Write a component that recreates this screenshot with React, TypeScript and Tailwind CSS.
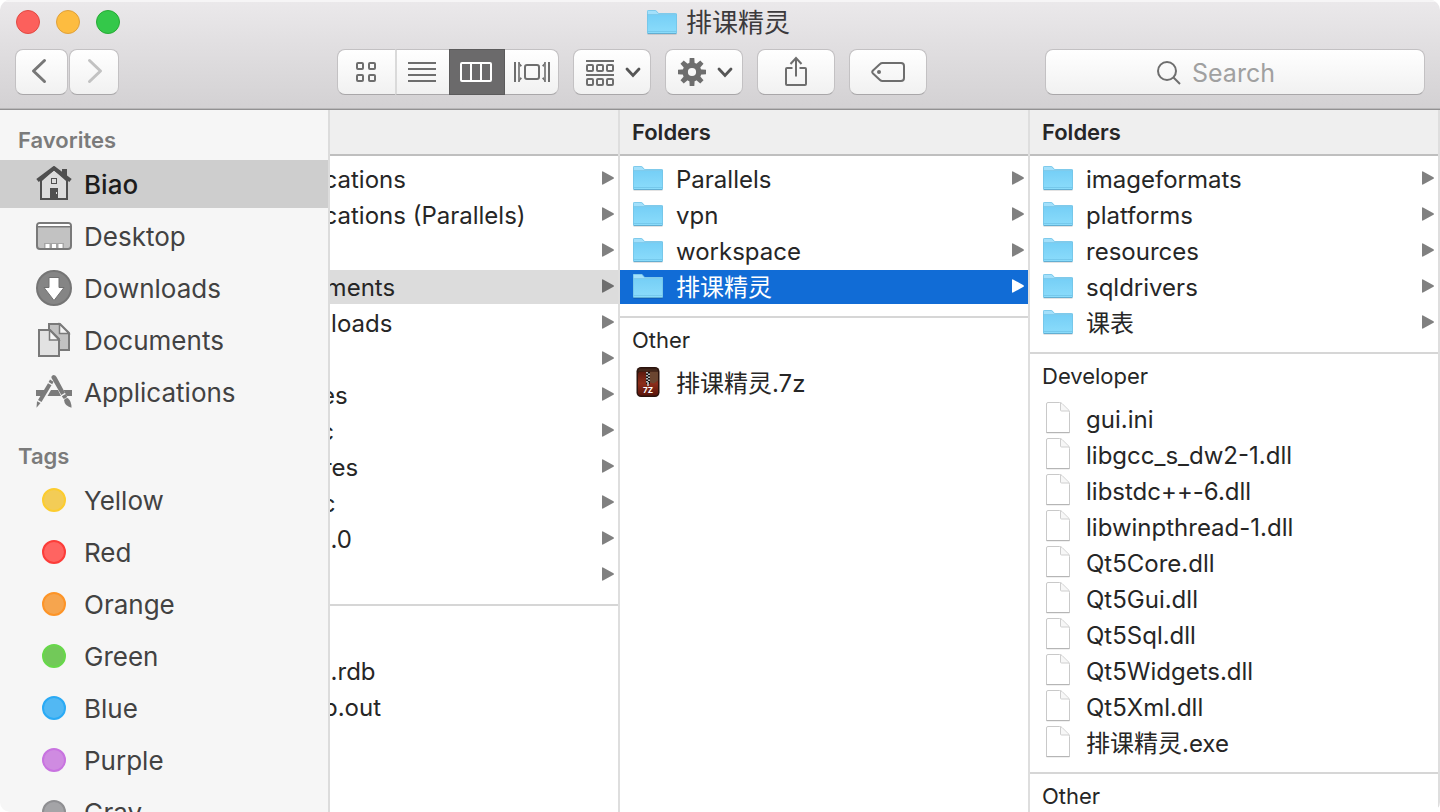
import React from "react";

type Kind = "folder" | "file" | "archive";
type Entry = { name: string; kind: Kind; selected?: "active" | "inactive" };
type Section = { title: string; entries: Entry[] };

const folder = (name: string, selected?: Entry["selected"]): Entry => ({ name, kind: "folder", selected });
const file = (name: string): Entry => ({ name, kind: "file" });

const columns: Section[][] = [
  [
    {
      title: "",
      entries: [
        folder("Applications"),
        folder("Applications (Parallels)"),
        folder(""),
        folder("Documents", "inactive"),
        folder("Downloads"),
        folder(""),
        folder("Movies"),
        folder("Music"),
        folder("Pictures"),
        folder("Public"),
        folder("Qt5.11.0"),
        folder(""),
      ],
    },
    { title: "", entries: [file("dump.rdb"), file("nohup.out")] },
  ],
  [
    {
      title: "Folders",
      entries: [folder("Parallels"), folder("vpn"), folder("workspace"), folder("排课精灵", "active")],
    },
    { title: "Other", entries: [{ name: "排课精灵.7z", kind: "archive" }] },
  ],
  [
    {
      title: "Folders",
      entries: [
        folder("imageformats"),
        folder("platforms"),
        folder("resources"),
        folder("sqldrivers"),
        folder("课表"),
      ],
    },
    {
      title: "Developer",
      entries: [
        file("gui.ini"),
        file("libgcc_s_dw2-1.dll"),
        file("libstdc++-6.dll"),
        file("libwinpthread-1.dll"),
        file("Qt5Core.dll"),
        file("Qt5Gui.dll"),
        file("Qt5Sql.dll"),
        file("Qt5Widgets.dll"),
        file("Qt5Xml.dll"),
        file("排课精灵.exe"),
      ],
    },
    { title: "Other", entries: [] },
  ],
];

const tags = [
  { name: "Yellow", dot: "border-[#fccc2f] bg-[#f3cc56]" },
  { name: "Red", dot: "border-[#fc3d39] bg-[#ff6461]" },
  { name: "Orange", dot: "border-[#fd9427] bg-[#f6a54e]" },
  { name: "Green", dot: "border-[#67d84a] bg-[#72c959]" },
  { name: "Blue", dot: "border-[#2aaaf5] bg-[#52b8f3]" },
  { name: "Purple", dot: "border-[#c873e0] bg-[#cf8be1]" },
  { name: "Gray", dot: "border-[#8f8f92] bg-[#a4a4a7]" },
];

function FolderIcon() {
  return (
    <svg width="32" height="26" viewBox="0 0 32 26" aria-hidden="true">
      <defs>
        <linearGradient id="folderFront" x1="0" y1="0" x2="0" y2="1">
          <stop offset="0" stopColor="#76cff6" />
          <stop offset="1" stopColor="#8bdcfb" />
        </linearGradient>
      </defs>
      <path d="M1.5 25.3h29" stroke="#000" strokeOpacity=".14" />
      <path d="M1 2.2Q1 1 2.2 1H9q1 0 1.7.8L12 3.4q.6.6 1.5.6h16.3q1.2 0 1.2 1.2V24H1z" fill="#a3e0fb" />
      <path d="M1 6h30v17.5q0 1-1 1H2q-1 0-1-1z" fill="url(#folderFront)" />
      <path d="M1 5.5h30M1.5 22.5h29" stroke="#67bce2" strokeOpacity=".6" fill="none" />
      <path d="M1.5 24.5h29" stroke="#62aed2" />
      <path d="M1.5 24V2.5q0-1 1-1H9q.8 0 1.4.7l1.3 1.6q.5.7 1.5.7h16.3q1 0 1 1V24" fill="none" stroke="#73c3e6" strokeOpacity=".75" />
    </svg>
  );
}

function FileIcon() {
  return (
    <svg width="32" height="34" viewBox="0 0 32 34" aria-hidden="true">
      <path d="M4.5 31.5V3q0-1.5 1.5-1.5h11.5q1.5 0 2.5 1l6.500 6.500q1 1 1 2.500v20z" fill="#fff" stroke="#c9c9c9" />
      <path d="M18.5 2v7q0 1 1 1h7.5" fill="#f7f7f7" stroke="#cfcfcf" />
      <path d="M4.5 31.7h23" stroke="#b0b0b0" />
    </svg>
  );
}

function ArchiveIcon() {
  return (
    <svg width="32" height="34" viewBox="0 0 32 34" aria-hidden="true">
      <defs>
        <linearGradient id="leather" x1="0" y1="0" x2="0" y2="1">
          <stop offset="0" stopColor="#5c1a0e" />
          <stop offset=".5" stopColor="#8c2d1a" />
          <stop offset="1" stopColor="#5a150b" />
        </linearGradient>
      </defs>
      <rect x="4.5" y="2" width="23" height="30" rx="4.5" fill="#2b130d" />
      <rect x="6" y="6.5" width="20" height="24" rx="3" fill="url(#leather)" />
      <path d="M18 6.5h8v9l-4 3-4-1z" fill="#6b4530" />
      <path d="M7 3.5h18l1 3H6z" fill="#43271b" />
      <path d="M16 7v12" stroke="#111" strokeWidth="4" />
      <path d="M15 7v12" stroke="#eee" strokeWidth="1.5" strokeDasharray="1.5 1.5" />
      <path d="M17 8.5v9" stroke="#eee" strokeWidth="1.5" strokeDasharray="1.5 1.5" />
      <path d="M16 17v4" stroke="#aaa" strokeWidth="2" />
      <text x="16" y="28" textAnchor="middle" fontSize="8" fontWeight="700" fill="#fff" fontFamily="Inter, sans-serif">
        7Z
      </text>
    </svg>
  );
}

const kindIcon: Record<Kind, React.ReactNode> = {
  folder: <FolderIcon />,
  file: <FileIcon />,
  archive: <ArchiveIcon />,
};

function HomeIcon() {
  return (
    <svg width="36" height="36" viewBox="0 1 36 36" aria-hidden="true" fill="none">
      <path d="M5 15.5V34h26V15.5L18 4z" fill="#dcdcdc" stroke="#4f4f4f" strokeWidth="2" />
      <path d="M26 4h5v9.500l-5-4z" fill="#4f4f4f" />
      <path d="M1.5 15.500L18 3.200l16.500 12.300" stroke="#4f4f4f" strokeWidth="4" />
      <rect x="15.500" y="13.500" width="5" height="5" fill="#dcdcdc" stroke="#4f4f4f" />
      <path d="M14 34V23h8v11z" fill="#4f4f4f" />
      <path d="M20.500 27v2" stroke="#ddd" />
    </svg>
  );
}

function DesktopIcon() {
  return (
    <svg width="36" height="36" viewBox="0 0 36 36" aria-hidden="true">
      <rect x="1" y="5" width="34" height="26" rx="3" fill="#c2c2c2" stroke="#797979" strokeWidth="2" />
      <path d="M2 8V7.500Q2 6 3.500 6h29Q34 6 34 7.500V8z" fill="#fff" />
      <path d="M2 8.800h32" stroke="#797979" strokeWidth="1.500" />
      <path d="M8 25h20v5H8z" fill="#a5a5a5" />
      <path d="M9.500 26h4v4h-4zM16 26h4v4h-4zM22.500 26h4v4h-4z" fill="#fff" />
    </svg>
  );
}

function DownloadsIcon() {
  return (
    <svg width="36" height="36" viewBox="0 0 36 36" aria-hidden="true">
      <circle cx="18" cy="18" r="17" fill="#858585" stroke="#757575" strokeWidth="2" />
      <path d="M13 7.500h10v10h5L18 30.500 8 17.500h5z" fill="#fff" stroke="#717171" />
    </svg>
  );
}

function DocumentsIcon() {
  return (
    <svg width="36" height="36" viewBox="0 0 36 36" aria-hidden="true" stroke="#797979" strokeWidth="2">
      <path d="M13 2h11l9 9v17H13z" fill="#c2c2c2" />
      <path d="M23.500 2v9.500H33z" fill="#f4f4f4" strokeWidth="1.500" />
      <path d="M3 8h11l9 9v17H3z" fill="#e2e2e2" />
      <path d="M13.500 8v10H23z" fill="#f6f6f6" strokeWidth="1.500" />
    </svg>
  );
}

function ApplicationsIcon() {
  return (
    <svg width="36" height="36" viewBox="0 0 36 36" aria-hidden="true" fill="#7b7b7b">
      <path d="M0 16h9.500L6 22H0zM15 16h7l3 6H11.500zM27.500 16H36v6h-5.300z" />
      <path d="M17.500 1q2 0 3 2L29 18.800l-3.700 2.300L15.500 4q-.6-2.200 2-3z" />
      <path d="M25.800 22.200l3.800-2.300 1.700 3-3.500 2.200z" />
      <path d="M28 26q2-2.500 4-1.800 3.500 3 3.500 9.500Q28.500 32 28 26z" />
      <path d="M14 5.500l3.500 2.200-1.300 2.500-3.600-2.200z" />
      <path d="M12 9.200l3.500 2.100L5.500 28 2 26z" />
      <path d="M1 27.300l3.500 1.800-4 4.700z" />
    </svg>
  );
}

const favorites = [
  { name: "Biao", icon: <HomeIcon />, current: true },
  { name: "Desktop", icon: <DesktopIcon /> },
  { name: "Downloads", icon: <DownloadsIcon /> },
  { name: "Documents", icon: <DocumentsIcon /> },
  { name: "Applications", icon: <ApplicationsIcon /> },
];

const gearTeeth = [0, 45, 90, 135, 180, 225, 270, 315];

function GearIcon() {
  return (
    <svg width="28" height="28" viewBox="0 0 28 28" aria-hidden="true">
      {gearTeeth.map((angle) => (
        <path key={angle} d="M11.200 7l.5-7h4.600l.5 7z" fill="#6e6e6e" transform={`rotate(${angle} 14 14)`} />
      ))}
      <circle cx="14" cy="14" r="6.800" fill="none" stroke="#6e6e6e" strokeWidth="5.400" />
    </svg>
  );
}

function ChevronDown() {
  return (
    <svg width="16" height="12" viewBox="0 0 16 12" aria-hidden="true" fill="none">
      <path d="M2 3l6 6.500L14 3" stroke="#555" strokeWidth="2.800" strokeLinecap="round" />
    </svg>
  );
}

function SmallBoxes({ y }: { y: number }) {
  return (
    <>
      {[1, 11, 21].map((x) => (
        <rect key={x} x={x} y={y} width="6" height="6" rx="1" />
      ))}
    </>
  );
}

const raised =
  "flex items-center justify-center border border-[#c3c1c3] border-b-[#a9a7a9] bg-gradient-to-b from-white to-[#f1f1f1]";

function Toolbar() {
  return (
    <header className="h-[110px] shrink-0 border-b border-[#929192] bg-gradient-to-b from-[#ebe9eb] to-[#d3d1d3] px-[15px] shadow-[inset_0_2px_0_#f6f5f6,inset_0_-1px_0_#b9b8b9]">
      <div className="grid h-11 grid-cols-[1fr_auto_1fr] items-center">
        <div className="flex gap-4 pl-px">
          <button aria-label="Close" className="size-6 rounded-full border border-[#e14942] bg-[#fc605c]" />
          <button aria-label="Minimize" className="size-6 rounded-full border border-[#dfa03a] bg-[#fdbc40]" />
          <button aria-label="Zoom" className="size-6 rounded-full border border-[#27aa35] bg-[#34c84a]" />
        </div>
        <h1 className="flex items-center gap-2 pr-1 text-[26px] leading-8 text-[#3c3a3c]">
          <FolderIcon />
          <span className="pt-0.5">排课精灵</span>
        </h1>
      </div>
      <div className="mt-[5px] flex h-[46px]">
        <div className="flex w-[322px] shrink-0 gap-px">
          <button aria-label="Back" className={`${raised} w-[53px] rounded-lg pr-1.5 pb-0.5`}>
            <svg width="16" height="26" viewBox="0 0 16 26" fill="none" aria-hidden="true">
              <path d="M13.5 2.500L2.500 13l11 10.500" stroke="#777" strokeWidth="3" strokeLinecap="round" strokeLinejoin="round" />
            </svg>
          </button>
          <button aria-label="Forward" className={`${raised} w-[50px] rounded-lg pb-0.5 pl-0.5`}>
            <svg width="16" height="26" viewBox="0 0 16 26" fill="none" aria-hidden="true">
              <path d="M2.500 2.500L13.500 13l-11 10.500" stroke="#c2c2c2" strokeWidth="3" strokeLinecap="round" strokeLinejoin="round" />
            </svg>
          </button>
        </div>
        <div className="flex shrink-0 gap-[14px]">
          <div className="flex">
            <button aria-label="Icon view" className={`${raised} w-[58px] rounded-l-lg border-r-0 pr-0.5`}>
              <svg width="20" height="20" viewBox="0 0 20 20" fill="none" stroke="#6e6e6e" strokeWidth="2" aria-hidden="true">
                <rect x="1" y="1" width="6" height="6" rx="1" />
                <rect x="13" y="1" width="6" height="6" rx="1" />
                <rect x="1" y="13" width="6" height="6" rx="1" />
                <rect x="13" y="13" width="6" height="6" rx="1" />
              </svg>
            </button>
            <button aria-label="List view" className={`${raised} w-[54px] border-r-0 border-l-2 border-l-[#dadada] pr-0.5`}>
              <svg width="28" height="20" viewBox="0 0 28 20" stroke="#6e6e6e" strokeWidth="2" aria-hidden="true">
                <path d="M0 1h28M0 7h28M0 13h28M0 19h28" />
              </svg>
            </button>
            <button
              aria-label="Column view"
              aria-pressed="true"
              className="flex w-14 items-center justify-center border border-[#5c5b5c] bg-[#6b6a6b] pr-0.5"
            >
              <svg width="32" height="20" viewBox="0 0 32 20" fill="none" stroke="#fff" strokeWidth="2" aria-hidden="true">
                <rect x="1" y="1" width="30" height="18" rx="1" />
                <path d="M11 1v18M21 1v18" />
              </svg>
            </button>
            <button aria-label="Cover flow view" className={`${raised} w-[54px] rounded-r-lg border-l-0`}>
              <svg width="36" height="20" viewBox="0 0 36 20" fill="none" stroke="#6e6e6e" strokeWidth="2" aria-hidden="true">
                <path d="M1 0v20M35 0v20" />
                <path d="M5 0v20M31 0v20" strokeWidth="1.600" />
                <path d="M4.500 0L8 3.500 6.500 5zM4.500 20L8 16.500 6.500 15zM31.500 0L28 3.500 29.500 5zM31.500 20L28 16.500l1.500-1.500z" fill="#6e6e6e" stroke="none" />
                <rect x="11" y="3" width="14" height="14" rx="2" />
              </svg>
            </button>
          </div>
          <button aria-label="Arrange items" className={`${raised} w-[78px] gap-[11px] rounded-lg pl-[3px]`}>
            <svg width="28" height="28" viewBox="0 0 28 28" fill="none" stroke="#6e6e6e" strokeWidth="2" aria-hidden="true">
              <path d="M0 3h28M0 17h28" />
              <SmallBoxes y={7} />
              <SmallBoxes y={21} />
            </svg>
            <ChevronDown />
          </button>
          <button aria-label="Action" className={`${raised} w-[78px] gap-[11px] rounded-lg pl-[3px]`}>
            <GearIcon />
            <ChevronDown />
          </button>
          <button aria-label="Share" className={`${raised} w-[78px] rounded-lg`}>
            <svg width="24" height="32" viewBox="0 0 24 32" fill="none" stroke="#6e6e6e" strokeWidth="2" aria-hidden="true">
              <path d="M8.500 12H3q-1 0-1 1v15q0 1 1 1h18q1 0 1-1V13q0-1-1-1h-5.500M12 20.500V2M6.500 8L12 2l5.500 6" />
            </svg>
          </button>
          <button aria-label="Edit tags" className={`${raised} w-[78px] rounded-lg`}>
            <svg width="34" height="22" viewBox="0 0 34 22" fill="none" stroke="#6e6e6e" strokeWidth="2" aria-hidden="true">
              <path d="M11.500 2H30q3 0 3 3v12q0 3-3 3H11.500q-1.500 0-2.500-1L2 12.500Q.5 11 2 9.500L9 3q1-1 2.500-1z" />
              <circle cx="8" cy="11" r="2" fill="#6e6e6e" stroke="none" />
            </svg>
          </button>
        </div>
        <label className={`${raised} ml-auto w-[380px] gap-2.5 rounded-lg pt-0.5`}>
          <svg width="26" height="26" viewBox="0 0 26 26" fill="none" stroke="#6e6e6e" strokeWidth="2" aria-hidden="true">
            <circle cx="11" cy="11" r="9" />
            <path d="M17.500 17.500l6.500 6.500" />
          </svg>
          <input
            type="search"
            placeholder="Search"
            aria-label="Search"
            className="w-[122px] bg-transparent text-[25px] leading-8 text-[#3c3a3c] outline-none placeholder:text-[#a0a0a0]"
          />
        </label>
      </div>
    </header>
  );
}

function SidebarHeading({ children }: { children: React.ReactNode }) {
  return <h2 className="flex h-10 items-center px-[18px] text-[22px] font-semibold text-[#7b7b7b]">{children}</h2>;
}

function Sidebar() {
  return (
    <nav className="flex w-[330px] shrink-0 flex-col gap-5 overflow-hidden border-r-2 border-[#dcdcdc] bg-[#f6f6f6] pt-2.5 text-[26px] text-[#424242]">
      <section>
        <SidebarHeading>Favorites</SidebarHeading>
        <ul className="flex flex-col gap-1">
          {favorites.map((item) => (
            <li key={item.name}>
              <a
                href="#"
                className={`flex h-12 items-center gap-3 pl-9 ${item.current ? "bg-[#cecece] font-medium text-[#1c1c1c]" : ""}`}
              >
                {item.icon}
                {item.name}
              </a>
            </li>
          ))}
        </ul>
      </section>
      <section>
        <SidebarHeading>Tags</SidebarHeading>
        <ul className="flex flex-col gap-1">
          {tags.map((tag) => (
            <li key={tag.name}>
              <a href="#" className="flex h-12 items-center gap-[18px] pl-[42px]">
                <span className={`size-6 rounded-full border-2 ${tag.dot}`} />
                {tag.name}
              </a>
            </li>
          ))}
        </ul>
      </section>
    </nav>
  );
}

function Row({ entry }: { entry: Entry }) {
  const tone =
    entry.selected === "active"
      ? "bg-[#116cd6] text-white"
      : entry.selected === "inactive"
        ? "bg-[#dcdcdc] text-[#262626]"
        : "text-[#262626]";
  const arrow =
    entry.selected === "active" ? "fill-white" : entry.selected === "inactive" ? "fill-[#6e6e6e]" : "fill-[#808080]";
  return (
    <li>
      <a
        href="#"
        aria-label={entry.name || "Folder"}
        className={`flex h-[34px] items-center gap-3 pr-1 pb-0.5 pl-3 ${tone}`}
      >
        {kindIcon[entry.kind]}
        <span className="flex-1 truncate pt-1 leading-8">{entry.name}</span>
        {entry.kind === "folder" && (
          <svg width="12" height="14" viewBox="0 0 12 14" className={arrow} aria-hidden="true">
            <path d="M0 1Q0 0 1 .4L11.500 6.200q.8.800 0 1.600L1 13.600Q0 14 0 13z" />
          </svg>
        )}
      </a>
    </li>
  );
}

function Column({ sections }: { sections: Section[] }) {
  return (
    <div className="min-w-0 flex-[1_0_410px] border-r-2 border-[#dedede] text-[24px]">
      {sections.map((section, index) => (
        <section key={index}>
          {index === 0 ? (
            <h3 className="flex h-[46px] items-center border-b-2 border-[#bfbfbf] bg-[#efefef] px-3 text-[22px] font-semibold text-[#262626]">
              {section.title}
            </h3>
          ) : (
            <h3 className="flex h-[46px] items-center border-t-2 border-[#d6d6d6] px-3 text-[22px] text-[#262626]">
              {section.title}
            </h3>
          )}
          <ul className={`flex flex-col gap-0.5 pb-3 ${index === 0 ? "pt-1.5" : "pt-1"}`}>
            {section.entries.map((entry, i) => (
              <Row key={i} entry={entry} />
            ))}
          </ul>
        </section>
      ))}
    </div>
  );
}

export default function App() {
  return (
    <div className="h-screen bg-white font-[Inter,'Noto_Sans_CJK_SC',sans-serif]">
      <div className="flex h-full flex-col overflow-hidden rounded-[10px] bg-white">
        <Toolbar />
        <div className="flex min-h-0 flex-1">
          <Sidebar />
          <main className="flex min-w-0 flex-1 justify-end overflow-hidden">
            {columns.map((sections, index) => (
              <Column key={index} sections={sections} />
            ))}
          </main>
        </div>
      </div>
    </div>
  );
}
